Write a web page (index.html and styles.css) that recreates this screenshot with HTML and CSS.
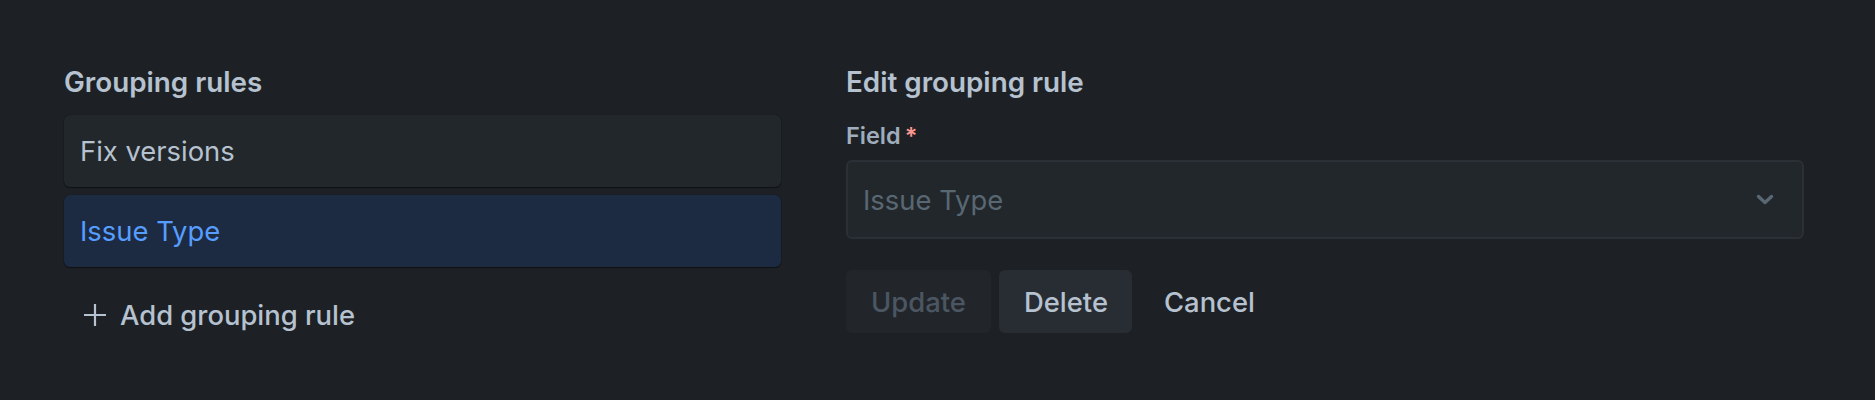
FILE: index.html
```html
<!DOCTYPE html>
<html lang="en">
<head>
<meta charset="utf-8">
<title>Grouping rules</title>
<link rel="stylesheet" href="styles.css">
</head>
<body>
<div class="page">
  <section class="col-left">
    <h2 class="heading">Grouping rules</h2>
    <ul class="rule-list">
      <li class="rule-item">Fix versions</li>
      <li class="rule-item rule-item--selected">Issue Type</li>
    </ul>
    <button class="add-btn" type="button">
      <svg class="plus" width="24" height="24" viewBox="0 0 24 24" aria-hidden="true">
        <path d="M12 1v22M1 12h22" stroke="currentColor" stroke-width="2.2" fill="none"/>
      </svg>
      <span>Add grouping rule</span>
    </button>
  </section>
  <section class="col-right">
    <h2 class="heading">Edit grouping rule</h2>
    <label class="field-label">Field<span class="req">*</span></label>
    <div class="select">
      <span class="placeholder">Issue Type</span>
      <svg class="chevron" width="18" height="12" viewBox="0 0 18 12" aria-hidden="true">
        <path d="M2.5 2.5l6.5 6 6.5-6" stroke="currentColor" stroke-width="3.4" fill="none" stroke-linecap="round" stroke-linejoin="round"/>
      </svg>
    </div>
    <div class="actions">
      <button class="btn btn--disabled" type="button">Update</button>
      <button class="btn btn--neutral" type="button">Delete</button>
      <button class="btn btn--subtle" type="button">Cancel</button>
    </div>
  </section>
</div>
</body>
</html>
```

FILE: styles.css
```css
* { box-sizing: border-box; }
html, body { margin: 0; padding: 0; }
body {
  background: #1D2125;
  font-family: Inter, "Noto Sans", "Liberation Sans", sans-serif;
  color: #B6C2CF;
  width: 1875px;
  height: 400px;
  overflow: hidden;
}
.page {
  display: flex;
  gap: 65px;
  padding: 66px 0 0 64px;
}
.col-left { width: 717px; }
.col-right { width: 958px; }
.heading {
  margin: 0;
  font-size: 27.8px;
  font-weight: 600;
  line-height: 33px;
  color: #B6C2CF;
}
.rule-list {
  list-style: none;
  margin: 16px 0 0;
  padding: 0;
  display: flex;
  flex-direction: column;
  gap: 8px;
}
.rule-item {
  height: 72px;
  display: flex;
  align-items: center;
  padding-left: 16px;
  border-radius: 6px;
  background: #22272B;
  box-shadow: 0 1px 1px rgba(3,4,4,0.5), 0 0 1px rgba(3,4,4,0.5);
  font-size: 27.4px;
  color: #B6C2CF;
}
.rule-item--selected {
  background: #1C2B41;
  color: #579DFF;
}
.add-btn {
  margin-top: 16px;
  height: 64px;
  display: flex;
  align-items: center;
  gap: 13px;
  padding: 0 0 0 19px;
  background: none;
  border: 0;
  font-family: inherit;
  font-size: 27.4px;
  font-weight: 500;
  color: #B6C2CF;
}
.plus { width: 24px; height: 24px; display: block; }
.field-label {
  display: block;
  margin-top: 23px;
  font-size: 23.5px;
  font-weight: 600;
  line-height: 28px;
  color: #9FADBC;
}
.req {
  color: #FD9891;
  margin-left: 4px;
}
.select {
  margin-top: 10px;
  height: 79px;
  display: flex;
  align-items: center;
  justify-content: space-between;
  padding: 0 28px 0 15px;
  background: #22272B;
  border: 2px solid #2A3036;
  border-radius: 6px;
}
.placeholder {
  font-size: 27.4px;
  color: #596773;
}
.chevron { color: #596773; display: block; }
.actions {
  margin-top: 31px;
  display: flex;
  gap: 8px;
}
.btn {
  height: 63px;
  padding: 0 25px;
  border: 0;
  border-radius: 6px;
  font-family: inherit;
  font-size: 27.4px;
  font-weight: 500;
  color: #B6C2CF;
  background: none;
}
.btn--disabled { background: #22262A; color: #4B5662; width: 145px; }
.btn--neutral { background: #282D33; width: 133px; }
.btn--subtle { padding: 0 24px; }
```
